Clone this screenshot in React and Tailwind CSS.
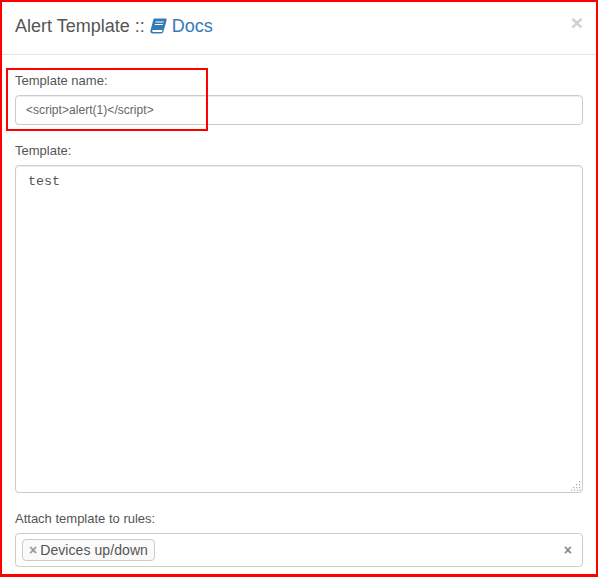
import React from "react";

function BookIcon() {
  return (
    <svg width="17" height="16" viewBox="0 0 17 16" className="shrink-0" aria-hidden="true">
      <path fill="#337ab7" d="M4.6 0.5H15.6C16.5 0.5 16.9 1.2 16.6 2.1L13.6 13C13.2 14.5 12.4 15.5 11 15.5H2.6C0.9 15.5 0 14.2 0.5 12.6L3.2 2C3.4 1.1 3.8 0.5 4.6 0.5Z" />
      <path fill="#ffffff" d="M5.7 3.4H13.7L13.45 4.4H5.45ZM5 6H13L12.75 7H4.75ZM3 11.9H12.6C12.3 13 12 14 11.1 14H3.1C1.9 14 2 11.9 3 11.9Z" />
    </svg>
  );
}

export default function App() {
  return (
    <div className="relative w-[598px] h-[577px] bg-white border-2 border-b-[3px] border-[#ff0000] font-['Liberation_Sans',Arial,sans-serif] text-[#555555] overflow-hidden">
      <header className="h-[53px] border-b border-[#e5e5e5] pl-[13px] pr-[13px] flex items-center justify-between">
        <h1 className="flex items-center text-[18px] leading-[20px] font-normal text-[#555555] -mt-[4px]">
          <span className="whitespace-pre">Alert Template :: </span>
          <a className="flex items-center text-[#337ab7]">
            <BookIcon />
            <span className="ml-[5px]">Docs</span>
          </a>
        </h1>
        <span className="text-[21px] font-bold leading-none text-[#cfcfcf] -mt-[12px] mr-0">×</span>
      </header>

      <main className="pl-[13px] pr-[13px] pt-[17px] flex flex-col">
        <label className="block text-[13px] leading-[18px] h-[23px]">Template name:</label>
        <div className="h-[30px] border border-[#cccccc] rounded-[4px] pl-[10px] flex items-center text-[12px] tracking-[0.04px] text-[#666666] shadow-[inset_0_1px_1px_rgba(0,0,0,0.075)]">
          {"<script>alert(1)</script>"}
        </div>

        <label className="block text-[13px] leading-[18px] h-[23px] mt-[17px]">Template:</label>
        <div className="relative h-[328px] border border-[#cccccc] rounded-[4px] pl-[12px] pt-[7px] font-['Liberation_Mono',monospace] text-[13.33px] leading-[18px] text-[#555555] shadow-[inset_0_1px_1px_rgba(0,0,0,0.075)]">
          test
          <svg width="12" height="12" viewBox="0 0 12 12" className="absolute right-0 bottom-0" aria-hidden="true">
            <g fill="#a8a8a8">
              <rect x="9" y="1" width="1.2" height="1.2" />
              <rect x="6" y="4" width="1.2" height="1.2" />
              <rect x="9" y="4" width="1.2" height="1.2" />
              <rect x="3" y="7" width="1.2" height="1.2" />
              <rect x="6" y="7" width="1.2" height="1.2" />
              <rect x="9" y="7" width="1.2" height="1.2" />
              <rect x="1" y="9.5" width="1.2" height="1.2" />
              <rect x="4" y="9.5" width="1.2" height="1.2" />
              <rect x="7" y="9.5" width="1.2" height="1.2" />
              <rect x="9.5" y="9.5" width="1.2" height="1.2" />
            </g>
          </svg>
        </div>

        <label className="block text-[13px] leading-[18px] h-[23px] mt-[17px]">Attach template to rules:</label>
        <div className="h-[34px] border border-[#cccccc] rounded-[4px] pl-[6px] pr-[9px] flex items-center justify-between">
          <span className="h-[22px] border border-[#cccccc] rounded-[4px] pl-[6px] pr-[6px] flex items-center text-[14px] tracking-[0.07px] text-[#555555] bg-[#fafafa]">
            <span className="font-bold text-[#999999] text-[14px] mr-[3px]">×</span>
            Devices up/down
          </span>
          <span className="font-bold text-[#888888] text-[14px] mr-[1px]">×</span>
        </div>
      </main>

      <div className="absolute left-[4px] top-[66px] w-[202px] h-[63px] border-2 border-[#ff0000] pointer-events-none" />
    </div>
  );
}
